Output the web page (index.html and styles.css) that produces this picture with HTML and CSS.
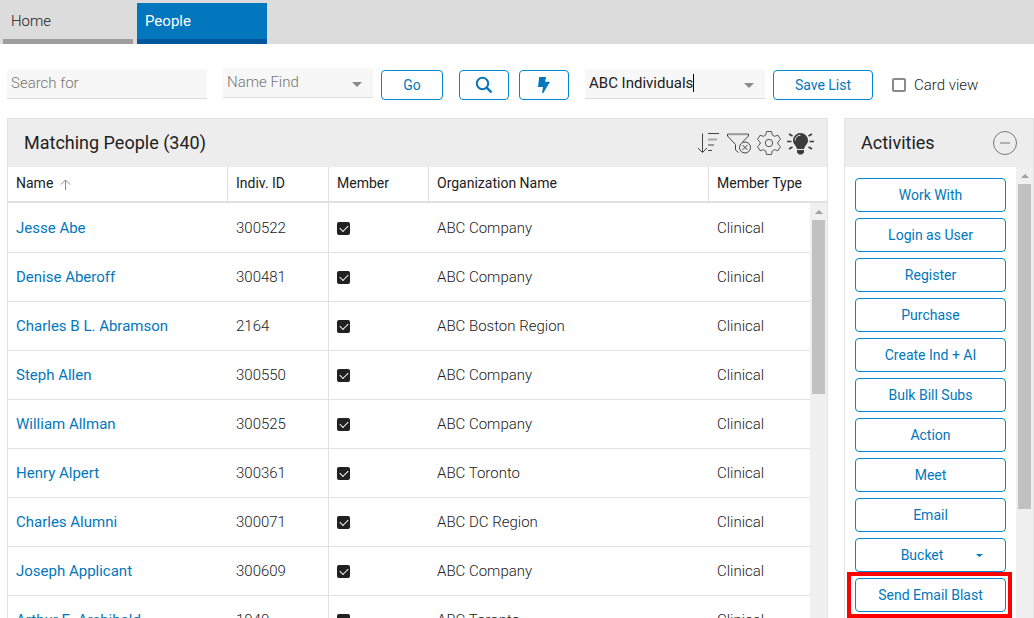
FILE: index.html
```html
<!DOCTYPE html>
<html lang="en">
<head>
<meta charset="utf-8">
<title>People</title>
<link rel="stylesheet" href="styles.css">
</head>
<body>
<nav class="tabs">
  <a class="tab" href="#home">Home</a>
  <a class="tab tab-active" href="#people" aria-current="page">People</a>
</nav>

<form class="toolbar">
  <input class="field search" type="text" placeholder="Search for" aria-label="Search for">
  <div class="field picker name-find">
    <select class="picker-select" aria-label="Find type"><option>Name Find</option></select>
    <svg class="arrow" viewBox="0 0 10 5" aria-hidden="true"><path d="M0 0h10L5 5z"/></svg>
  </div>
  <button class="btn go" type="button">Go</button>
  <button class="btn icon-btn find" type="button" aria-label="Search">
    <svg width="18" height="18" viewBox="0 0 18 18" fill="none" stroke="#0277bd" stroke-width="2"><circle cx="7.5" cy="7.5" r="5.7"/><path d="M11.7 11.7l4.8 4.8" stroke-width="2.4"/></svg>
  </button>
  <button class="btn icon-btn bolt" type="button" aria-label="Quick actions">
    <svg width="14" height="18" viewBox="0 0 14 18" fill="#0277bd"><path d="M2.200 1h7L8 5.800h5L6.300 17H5l1-6H1z"/></svg>
  </button>
  <div class="field picker list-name">
    <input class="picker-input" type="text" value="ABC Individuals" aria-label="List">
    <span class="caret"></span>
    <svg class="arrow" viewBox="0 0 10 5" aria-hidden="true"><path d="M0 0h10L5 5z"/></svg>
  </div>
  <button class="btn save" type="button">Save List</button>
  <label class="card-view"><input class="card-check" type="checkbox">Card view</label>
</form>

<main class="content">
  <section class="panel people">
    <header class="panel-head">
      <h2 class="panel-title">Matching People (340)</h2>
      <div class="tools">
        <button class="tool" type="button" aria-label="Sort">
          <svg width="24" height="24" viewBox="0 0 24 24" fill="none" stroke="#444"><path d="M6.500 2.500v19M2 17l4.500 4.500L11 17"/><path d="M12 2.500h11M12 14h6M12 19.500h4"/><path d="M12 8.500h9" stroke="#aaa" stroke-width="2"/></svg>
        </button>
        <button class="tool" type="button" aria-label="Clear filter">
          <svg width="26" height="24" viewBox="0 0 26 24" fill="none" stroke="#444"><path d="M2.500 3.200h21" stroke="#999" stroke-width="2"/><path d="M2.500 3v2l8 8.500v5.500l3 2.500M23.500 3v2l-6 6"/><circle cx="20" cy="16.500" r="5.500"/><path d="M17.500 14l5 5M22.500 14l-5 5"/></svg>
        </button>
        <button class="tool" type="button" aria-label="Settings">
          <svg width="26" height="26" viewBox="0 0 26 26" fill="none" stroke="#555"><circle cx="13" cy="13" r="3.700"/><path d="M10.500 1.500h5l.8 3.500 2.200 1.300 3.500-1 2.500 4.200-2.600 2.500v2l2.600 2.500-2.500 4.200-3.500-1-2.200 1.300-.8 3.500h-5L9.700 21l-2.200-1.300-3.500 1-2.500-4.200L4.100 14v-2L1.500 9.500 4 5.300l3.500 1L9.700 5z" stroke-linejoin="round"/></svg>
        </button>
        <button class="tool" type="button" aria-label="Insights">
          <svg width="28" height="24" viewBox="0 0 28 24" fill="#3c3c3c"><path d="M13.500 2A7.500 7.500 0 0 0 6 9.500c0 3.500 3 4.500 4 8.500h7c1-4 4-5 4-8.500A7.500 7.500 0 0 0 13.500 2zM10 19h7v2.500l-2 2h-3l-2-2z"/><path d="M8 9.500a5.500 5.500 0 0 1 5.500-5.300" fill="none" stroke="#ededed"/><path d="M0 10.500h4.500M22.500 10.500H27M2 3l3.500 2M25 3l-3.500 2M2 18l3.500-2M25 18l-3.500-2" stroke="#3c3c3c" stroke-width="1.700"/></svg>
        </button>
      </div>
    </header>
    <div class="grid-body">
      <table class="grid">
        <colgroup><col class="c-name"><col class="c-id"><col class="c-member"><col class="c-org"><col class="c-type"></colgroup>
        <thead>
          <tr><th>Name <svg class="sort-arrow" width="11" height="11" viewBox="0 0 11 11" fill="none" stroke="#888" aria-hidden="true"><path d="M5.500 11V1M1 5.500L5.500 1 10 5.500"/></svg></th><th>Indiv. ID</th><th>Member</th><th>Organization Name</th><th>Member Type</th></tr>
        </thead>
        <tbody>
          <tr><td><a class="person" href="#300522">Jesse Abe</a></td><td>300522</td><td><input class="member" type="checkbox" aria-label="Member" checked></td><td>ABC Company</td><td>Clinical</td></tr>
          <tr><td><a class="person" href="#300481">Denise Aberoff</a></td><td>300481</td><td><input class="member" type="checkbox" aria-label="Member" checked></td><td>ABC Company</td><td>Clinical</td></tr>
          <tr><td><a class="person" href="#2164">Charles B L. Abramson</a></td><td>2164</td><td><input class="member" type="checkbox" aria-label="Member" checked></td><td>ABC Boston Region</td><td>Clinical</td></tr>
          <tr><td><a class="person" href="#300550">Steph Allen</a></td><td>300550</td><td><input class="member" type="checkbox" aria-label="Member" checked></td><td>ABC Company</td><td>Clinical</td></tr>
          <tr><td><a class="person" href="#300525">William Allman</a></td><td>300525</td><td><input class="member" type="checkbox" aria-label="Member" checked></td><td>ABC Company</td><td>Clinical</td></tr>
          <tr><td><a class="person" href="#300361">Henry Alpert</a></td><td>300361</td><td><input class="member" type="checkbox" aria-label="Member" checked></td><td>ABC Toronto</td><td>Clinical</td></tr>
          <tr><td><a class="person" href="#300071">Charles Alumni</a></td><td>300071</td><td><input class="member" type="checkbox" aria-label="Member" checked></td><td>ABC DC Region</td><td>Clinical</td></tr>
          <tr><td><a class="person" href="#300609">Joseph Applicant</a></td><td>300609</td><td><input class="member" type="checkbox" aria-label="Member" checked></td><td>ABC Company</td><td>Clinical</td></tr>
          <tr><td><a class="person" href="#1040">Arthur E. Archibald</a></td><td>1040</td><td><input class="member" type="checkbox" aria-label="Member" checked></td><td>ABC Toronto</td><td>Clinical</td></tr>
        </tbody>
      </table>
      <div class="scrollbar grid-scroll"><svg class="scroll-up" viewBox="0 0 8 4" aria-hidden="true"><path d="M0 4L4 0l4 4z"/></svg><div class="thumb grid-thumb"></div></div>
    </div>
  </section>

  <aside class="panel activities">
    <header class="panel-head">
      <h2 class="panel-title">Activities</h2>
      <button class="tool" type="button" aria-label="Collapse"><svg width="26" height="26" viewBox="0 0 26 26" fill="none" stroke="#777"><circle cx="13" cy="13" r="11.500"/><path d="M8 13h10"/></svg></button>
    </header>
    <div class="activity-body">
      <div class="actions">
        <button class="btn action" type="button">Work With</button>
        <button class="btn action" type="button">Login as User</button>
        <button class="btn action" type="button">Register</button>
        <button class="btn action" type="button">Purchase</button>
        <button class="btn action" type="button">Create Ind + AI</button>
        <button class="btn action" type="button">Bulk Bill Subs</button>
        <button class="btn action" type="button">Action</button>
        <button class="btn action" type="button">Meet</button>
        <button class="btn action" type="button">Email</button>
        <button class="btn action bucket" type="button">Bucket <svg width="7" height="3" viewBox="0 0 7 3" fill="#0277bd" aria-hidden="true"><path d="M0 0h7L3.500 3z"/></svg></button>
        <button class="btn action highlighted" type="button">Send Email Blast</button>
      </div>
      <div class="scrollbar"><svg class="scroll-up" viewBox="0 0 8 4" aria-hidden="true"><path d="M0 4L4 0l4 4z"/></svg><div class="thumb activity-thumb"></div></div>
    </div>
  </aside>
</main>
</body>
</html>
```
FILE: styles.css
```css
* { box-sizing: border-box; }

body {
  margin: 0;
  height: 100vh;
  overflow: hidden;
  display: flex;
  flex-direction: column;
  background: #fff;
  color: #212121;
  font: 300 15px/20px Roboto, sans-serif;
}

button, input, select { font: inherit; color: inherit; }

.tabs {
  display: flex;
  gap: 4px;
  padding: 3px 3px 0;
  background: #dcdcdc;
}

.tab {
  width: 130px;
  height: 41px;
  padding: 8px;
  border-bottom: 5px solid #9e9e9e;
  color: #212121;
  text-decoration: none;
}

.tab-active {
  background: #0277bd;
  border-color: #01579b;
  color: #fff;
  font-weight: 400;
}

.toolbar {
  display: flex;
  align-items: center;
  height: 74px;
  padding: 7px 7px 0;
}

.field {
  height: 30px;
  margin-bottom: 2px;
  padding: 0 4px;
  border: 0;
  border-bottom: 1px solid #dcdcdc;
  background: #f7f7f7;
  outline: 0;
}

.search { width: 200px; }
.search::placeholder { color: #757575; opacity: 1; }

.picker {
  position: relative;
  display: flex;
  align-items: center;
}

.name-find { width: 150px; margin: 0 0 4px 16px; }
.list-name { width: 180px; margin-left: 16px; font-weight: 400; }

.picker-select {
  flex: 1;
  appearance: none;
  border: 0;
  padding: 0;
  background: none;
  color: #757575;
}

.picker-input {
  field-sizing: content;
  border: 0;
  padding: 0;
  background: none;
  outline: 0;
}

.caret { width: 1px; height: 18px; background: #000; }

.arrow {
  position: absolute;
  right: 11px;
  top: 14px;
  width: 10px;
  height: 5px;
  fill: #8a8a8a;
}

.btn {
  display: flex;
  align-items: center;
  justify-content: center;
  height: 30px;
  padding: 0;
  border: 1px solid #0288d1;
  border-radius: 4px;
  background: #fff;
  color: #0277bd;
  font-size: 14px;
  font-weight: 400;
}

.go { width: 62px; margin-left: 8px; }
.icon-btn { width: 50px; }
.find { margin-left: 16px; }
.bolt { margin-left: 10px; }
.save { width: 100px; margin-left: 8px; }

.card-view {
  display: flex;
  align-items: center;
  gap: 8px;
  margin-left: 19px;
}

.card-check {
  appearance: none;
  width: 14px;
  height: 14px;
  margin: 0;
  border: 2px solid #8a8a8a;
  border-radius: 2px;
}

.content {
  flex: 1;
  min-height: 0;
  display: flex;
  gap: 16px;
  padding-left: 7px;
}

.panel {
  display: flex;
  flex-direction: column;
  border: 1px solid #e4e4e4;
  border-bottom: 0;
}

.people { flex: 1; min-width: 0; }
.activities { width: 190px; }

.panel-head {
  display: flex;
  align-items: center;
  justify-content: space-between;
  height: 48px;
  padding: 0 12px 0 16px;
  background: #ededed;
}

.panel-title {
  margin: 0;
  font-size: 18px;
  font-weight: 400;
}

.tools { display: flex; align-items: center; gap: 5px; }

.tool {
  display: flex;
  padding: 0;
  border: 0;
  background: none;
}

.activities .tool { margin-right: 3px; }

.grid-body {
  position: relative;
  flex: 1;
  min-height: 0;
  overflow: hidden;
}

.grid {
  width: 100%;
  table-layout: fixed;
  border-collapse: separate;
  border-spacing: 0;
}

.c-name { width: 220px; }
.c-id { width: 101px; }
.c-member { width: 100px; }
.c-type { width: 118px; }

.grid th {
  height: 36px;
  padding: 0 8px 2px;
  border-right: 1px solid #e0e0e0;
  border-bottom: 2px solid #e0e0e0;
  text-align: left;
  font-size: 14px;
  font-weight: 400;
}

.grid th:last-child { border-right: 0; }

.grid td {
  height: 49px;
  padding: 0 8px;
  border-bottom: 1px solid #e0e0e0;
}

.grid td:nth-child(2) { border-right: 1px solid #e0e0e0; }

.grid tbody tr:first-child td {
  height: 50px;
  padding-top: 1px;
}

.sort-arrow { margin-left: 3px; vertical-align: -2px; }

.person {
  color: #0277bd;
  font-weight: 400;
  text-decoration: none;
}

.member {
  display: grid;
  place-items: center;
  appearance: none;
  width: 13px;
  height: 13px;
  margin: 0;
  border-radius: 2px;
  background: #212121;
}

.member::before {
  content: "";
  width: 7px;
  height: 4px;
  margin-bottom: 2px;
  border: solid #fff;
  border-width: 0 0 1px 1px;
  rotate: -45deg;
}

.scrollbar {
  width: 17px;
  padding: 0 2px;
  background: #f0f0f0;
}

.grid-scroll {
  position: absolute;
  top: 36px;
  right: 0;
  bottom: 0;
}

.scroll-up {
  display: block;
  width: 8px;
  height: 4px;
  margin: 7px auto 6px;
  fill: #a0a0a0;
}

.thumb { background: #c1c1c1; }
.grid-thumb { height: 42%; }
.activity-thumb { height: 72%; }

.activity-body {
  flex: 1;
  min-height: 0;
  display: flex;
}

.actions {
  flex: 1;
  display: flex;
  flex-direction: column;
  gap: 6px;
  padding: 11px 10px 0;
}

.action { flex: none; height: 34px; }
.bucket { gap: 33px; padding-left: 23px; }

.highlighted { position: relative; }

.highlighted::after {
  content: "";
  position: absolute;
  inset: -7px -7px -7px -9px;
  border: 4px solid #f00;
}
```
